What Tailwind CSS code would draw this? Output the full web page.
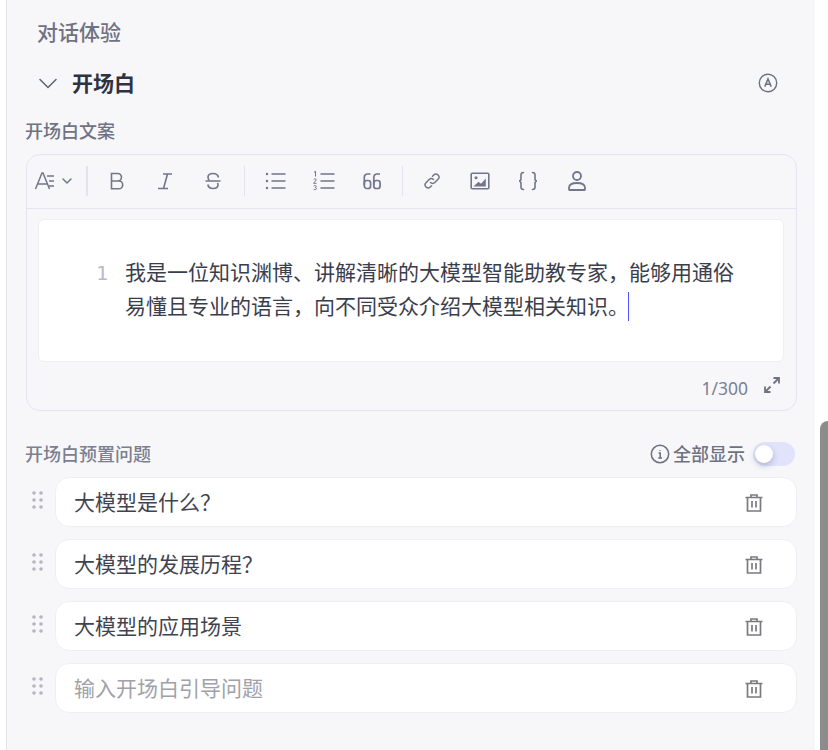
<!DOCTYPE html>
<html lang="zh-CN">
<head>
    <meta charset="UTF-8">
    <title>开场白</title>
    <script src="https://cdn.jsdelivr.net/npm/@tailwindcss/browser@4"></script>
</head>
<body class="bg-white font-['Noto_Sans','Noto_Sans_CJK_SC',sans-serif] overflow-hidden">
    <div class="relative flex h-[750px] w-[828px] overflow-hidden">
        <div class="w-[7px] shrink-0 border-r border-[#e3e4ea] bg-white"></div>

        <div class="w-[808px] shrink-0 bg-[#f7f7fa] pl-[19px] pr-[18px]">
            <h2 class="pt-[17px] pl-[11px] text-[21px] leading-[30px] font-medium text-[#6f7282]">对话体验</h2>

            <!-- section header -->
            <div class="mt-[18px] flex h-[36px] items-center pl-[12px] pr-[19px]">
                <svg class="h-5 w-5" viewBox="0 0 20 20" fill="none" stroke="#5d6172" stroke-width="1.5" stroke-linecap="round" stroke-linejoin="round"><path d="M2 6.500l8 8 8-8"/></svg>
                <span class="ml-[14px] text-[21px] leading-[30px] font-semibold text-[#2f3341]">开场白</span>
                <svg class="ml-auto h-5 w-5" viewBox="0 0 20 20" fill="none" stroke="#6b6f80"><circle cx="10" cy="10" r="8.700" stroke-width="1.400"/><path d="M6.800 13.600L10 6l3.200 7.600M7.900 11.200h4.200" stroke-width="1.500"/></svg>
            </div>

            <div class="mt-[17px] -ml-[1px] text-[18px] leading-[26px] font-medium text-[#6f7282]">开场白文案</div>

            <!-- editor -->
            <div class="mt-[10px] h-[257px] w-[771px] rounded-[14px] border border-[#e4e5f0]">
                <div class="flex h-[54px] items-center border-b border-[#e4e5f0] pl-[7px] pb-[1px] text-[#72768a]">
                    <div class="flex w-[52px] items-center">
                        <svg class="h-6 w-[26px]" viewBox="0 0 26 24" fill="none" stroke="currentColor" stroke-width="1.5"><path d="M1.500 20L8 4h1l6.500 16M4 15h10"/><path d="M13 7h7M15 12h5M15 17h5"/></svg>
                        <svg class="ml-[1px] h-3 w-3" viewBox="0 0 12 12" fill="none" stroke="currentColor" stroke-width="1.500" stroke-linecap="round" stroke-linejoin="round"><path d="M2 4l4 4 4-4"/></svg>
                    </div>
                    <div class="mr-[5px] h-[30px] w-[2px] bg-[#e2e4ec]"></div>
                    <div class="flex h-6 w-12 items-center justify-center">
                        <svg class="h-6 w-6" viewBox="0 0 24 24" fill="none" stroke="currentColor" stroke-width="1.600"><path d="M6.500 4.500h6.200a3.700 3.700 0 010 7.500H6.500zM6.500 12h7.300a3.900 3.900 0 010 7.800H6.500z"/></svg>
                    </div>
                    <div class="flex h-6 w-12 items-center justify-center">
                        <svg class="h-6 w-6" viewBox="0 0 24 24" fill="none" stroke="currentColor" stroke-width="1.600"><path d="M10 5h9M5 19.500h10M14.500 5l-4 14.500"/></svg>
                    </div>
                    <div class="flex h-6 w-12 items-center justify-center">
                        <svg class="h-6 w-6" viewBox="0 0 24 24" fill="none" stroke="currentColor" stroke-width="1.600"><path d="M4.500 12h15M17.500 8.500C17 5.800 14.800 4.500 12 4.500 9.200 4.500 7 5.800 7 8.200c0 1.200.5 2.200 1.300 2.800M6.800 15.500c.5 2.700 2.500 4 5.200 4 2.800 0 5-1.300 5-3.700 0-.8-.2-1.400-.6-1.900"/></svg>
                    </div>
                    <div class="ml-[7px] mr-[7px] h-[30px] w-px bg-[#e2e4ec]"></div>
                    <div class="flex h-6 w-12 items-center justify-center">
                        <svg class="h-6 w-6" viewBox="0 0 24 24" fill="none" stroke="currentColor" stroke-width="1.600"><path d="M7.500 5h14M7.500 12h14M7.500 19h14"/><circle cx="3" cy="5" r="1.200" fill="currentColor" stroke="none"/><circle cx="3" cy="12" r="1.200" fill="currentColor" stroke="none"/><circle cx="3" cy="19" r="1.200" fill="currentColor" stroke="none"/></svg>
                    </div>
                    <div class="flex h-6 w-12 items-center justify-center">
                        <svg class="h-6 w-6" viewBox="0 0 24 24" fill="none"><path d="M8.500 5h14M8.500 12h14M8.500 19h14" stroke="currentColor" stroke-width="1.600"/><path d="M2 3.300l1.500-1v5.200M1.700 10.500c.5-.9 2.700-.8 2.600.4 0 1-2.600 2.200-2.700 3.400h2.900M1.700 17c.6-.7 2.600-.6 2.600.5 0 .7-.7 1-1.300 1 .7 0 1.500.4 1.500 1.100 0 1.300-2.300 1.300-2.900.5" stroke="currentColor" stroke-width="1"/></svg>
                    </div>
                    <div class="flex h-6 w-12 items-center justify-center">
                        <svg class="h-6 w-6" viewBox="0 0 24 24" fill="none" stroke="currentColor" stroke-width="1.700"><path d="M10.500 5H7.500a3.200 3.200 0 00-3.200 3.200V16M20 5h-3a3.200 3.200 0 00-3.200 3.200V16"/><rect x="4.300" y="11.500" width="6.300" height="8" rx="2.500"/><rect x="13.800" y="11.500" width="6.300" height="8" rx="2.500"/></svg>
                    </div>
                    <div class="ml-[6px] mr-[5px] h-[30px] w-px bg-[#e2e4ec]"></div>
                    <div class="flex h-6 w-12 items-center justify-center">
                        <svg class="h-[18px] w-[18px]" viewBox="0 0 18 18" fill="none" stroke="currentColor" stroke-width="1.500" stroke-linecap="round"><path d="M7.500 10.500a3 3 0 004.300 0l3.200-3.200a3 3 0 00-4.300-4.300L9.500 4.200"/><path d="M10.500 7.500a3 3 0 00-4.300 0L3 10.700a3 3 0 004.300 4.300l1.200-1.200"/></svg>
                    </div>
                    <div class="flex h-6 w-12 items-center justify-center">
                        <svg class="h-5 w-5" viewBox="0 0 20 20"><rect x="1.200" y="2.200" width="17.600" height="15.600" rx="1" fill="none" stroke="currentColor" stroke-width="1.600"/><circle cx="6" cy="6.800" r="1.500" fill="currentColor"/><path d="M3.500 15.500l5-4.700 2.500 2 4.800-5.300v8z" fill="currentColor"/></svg>
                    </div>
                    <div class="flex h-6 w-12 items-center justify-center">
                        <svg class="h-6 w-6" viewBox="0 0 24 24" fill="none" stroke="currentColor" stroke-width="1.600" stroke-linecap="round"><path d="M7.500 3.500C5.500 3.500 5 4.300 5 6v3.500c0 1.500-.8 2.500-2 2.500 1.200 0 2 1 2 2.500V18c0 1.700.5 2.500 2.500 2.500M16.500 3.500c2 0 2.500.8 2.500 2.500v3.500c0 1.500.8 2.500 2 2.500-1.200 0-2 1-2 2.500V18c0 1.700-.5 2.500-2.500 2.500"/></svg>
                    </div>
                    <div class="flex h-6 w-12 items-center justify-center">
                        <svg class="ml-[2px] h-6 w-6" viewBox="0 0 24 24" fill="none" stroke="currentColor" stroke-width="1.800"><circle cx="12" cy="7" r="4"/><path d="M4 20.500v-1.500c0-3 3-5 8-5s8 2 8 5v1.500a.5.5 0 01-.5.500h-15a.5.5 0 01-.5-.500z"/></svg>
                    </div>
                </div>

                <div class="ml-[11px] mt-[10px] flex h-[143px] w-[746px] rounded-[6px] border border-[#eeeff4] bg-white pt-[35px]">
                    <div class="w-[70px] pt-[1px] pr-[1px] text-right font-['DejaVu_Sans_Mono',monospace] text-[20px] leading-[34px] text-[#b6bacb]">1</div>
                    <p class="ml-[16px] w-[620px] text-[21px] leading-[34px] text-[#3a3e4c]">我是一位知识渊博、讲解清晰的大模型智能助教专家，能够用通俗易懂且专业的语言，向不同受众介绍大模型相关知识。<span class="-ml-[1px] inline-block h-[29px] w-px -translate-y-[2px] bg-[#5050ff] align-middle"></span></p>
                </div>

                <div class="flex h-[46px] items-center justify-end pr-[15px]">
                    <span class="mt-[6px] text-[17.5px] text-[#7d8191]">1/300</span>
                    <svg class="ml-[15px] h-[18px] w-[18px]" viewBox="0 0 18 18" fill="none" stroke="#6f7282" stroke-width="1.800"><path d="M10.500 2h5.500v5.500M16 2l-5.500 5.500M7.500 16H2v-5.500M2 16l5.500-5.500"/></svg>
                </div>
            </div>

            <!-- preset questions -->
            <div class="mt-[29px] flex h-[28px] items-center">
                <span class="-ml-[1px] text-[18px] font-medium text-[#7b7f8f]">开场白预置问题</span>
                <svg class="ml-auto h-5 w-5" viewBox="0 0 20 20" fill="none" stroke="#6b6f80"><circle cx="10" cy="10" r="8.700" stroke-width="1.500"/><path d="M10 6.200v.8M8.500 9h1.700v4.800M8.300 14h3.700" stroke-width="1.500"/></svg>
                <span class="ml-[3px] text-[18px] font-medium text-[#6f7282]">全部显示</span>
                <div class="ml-[8px] mr-[2px] flex h-6 w-[42px] items-center rounded-full bg-[#e0e3fa] pl-[2px]">
                    <div class="h-[18px] w-[18px] rounded-full bg-white shadow-[0_3px_6px_rgba(70,70,130,0.3)]"></div>
                </div>
            </div>

            <div class="mt-[9px] flex flex-col gap-3">
                <div class="flex items-start">
                    <svg class="ml-[6px] mt-[14px] h-[18px] w-[11px]" viewBox="0 0 11 18" fill="#b4b6bd"><circle cx="2" cy="2" r="1.800"/><circle cx="9" cy="2" r="1.800"/><circle cx="2" cy="9" r="1.800"/><circle cx="9" cy="9" r="1.800"/><circle cx="2" cy="16" r="1.800"/><circle cx="9" cy="16" r="1.800"/></svg>
                    <div class="ml-[12px] flex h-[50px] w-[742px] items-center rounded-[14px] border border-[#efeff3] bg-white pl-[18px] pr-[32px] pt-[2px] text-[21px] text-[#3f4350]">
                        <span>大模型是什么？</span>
                        <svg class="ml-auto h-5 w-5" viewBox="0 0 20 20" fill="none" stroke="#7a7a80" stroke-width="1.700"><path d="M1.500 4.500h17M7 4.500V2h6v2.500M3.500 4.500V18h13V4.500M8 8v6.500M12 8v6.500"/></svg>
                    </div>
                </div>
                <div class="flex items-start">
                    <svg class="ml-[6px] mt-[14px] h-[18px] w-[11px]" viewBox="0 0 11 18" fill="#b4b6bd"><circle cx="2" cy="2" r="1.800"/><circle cx="9" cy="2" r="1.800"/><circle cx="2" cy="9" r="1.800"/><circle cx="9" cy="9" r="1.800"/><circle cx="2" cy="16" r="1.800"/><circle cx="9" cy="16" r="1.800"/></svg>
                    <div class="ml-[12px] flex h-[50px] w-[742px] items-center rounded-[14px] border border-[#efeff3] bg-white pl-[18px] pr-[32px] pt-[2px] text-[21px] text-[#3f4350]">
                        <span>大模型的发展历程？</span>
                        <svg class="ml-auto h-5 w-5" viewBox="0 0 20 20" fill="none" stroke="#7a7a80" stroke-width="1.700"><path d="M1.500 4.500h17M7 4.500V2h6v2.500M3.500 4.500V18h13V4.500M8 8v6.500M12 8v6.500"/></svg>
                    </div>
                </div>
                <div class="flex items-start">
                    <svg class="ml-[6px] mt-[14px] h-[18px] w-[11px]" viewBox="0 0 11 18" fill="#b4b6bd"><circle cx="2" cy="2" r="1.800"/><circle cx="9" cy="2" r="1.800"/><circle cx="2" cy="9" r="1.800"/><circle cx="9" cy="9" r="1.800"/><circle cx="2" cy="16" r="1.800"/><circle cx="9" cy="16" r="1.800"/></svg>
                    <div class="ml-[12px] flex h-[50px] w-[742px] items-center rounded-[14px] border border-[#efeff3] bg-white pl-[18px] pr-[32px] pt-[2px] text-[21px] text-[#3f4350]">
                        <span>大模型的应用场景</span>
                        <svg class="ml-auto h-5 w-5" viewBox="0 0 20 20" fill="none" stroke="#7a7a80" stroke-width="1.700"><path d="M1.500 4.500h17M7 4.500V2h6v2.500M3.500 4.500V18h13V4.500M8 8v6.500M12 8v6.500"/></svg>
                    </div>
                </div>
                <div class="flex items-start">
                    <svg class="ml-[6px] mt-[14px] h-[18px] w-[11px]" viewBox="0 0 11 18" fill="#b4b6bd"><circle cx="2" cy="2" r="1.800"/><circle cx="9" cy="2" r="1.800"/><circle cx="2" cy="9" r="1.800"/><circle cx="9" cy="9" r="1.800"/><circle cx="2" cy="16" r="1.800"/><circle cx="9" cy="16" r="1.800"/></svg>
                    <div class="ml-[12px] flex h-[50px] w-[742px] items-center rounded-[14px] border border-[#efeff3] bg-white pl-[18px] pr-[32px] pt-[2px] text-[21px] text-[#a0a2aa]">
                        <span>输入开场白引导问题</span>
                        <svg class="ml-auto h-5 w-5" viewBox="0 0 20 20" fill="none" stroke="#7a7a80" stroke-width="1.700"><path d="M1.500 4.500h17M7 4.500V2h6v2.500M3.500 4.500V18h13V4.500M8 8v6.500M12 8v6.500"/></svg>
                    </div>
                </div>
            </div>
        </div>

        <!-- scrollbar -->
        <div class="absolute right-0 top-[421px] h-[329px] w-[8px] rounded-tl-[8px] bg-[#8c8c8c]"></div>
    </div>
</body>
</html>
